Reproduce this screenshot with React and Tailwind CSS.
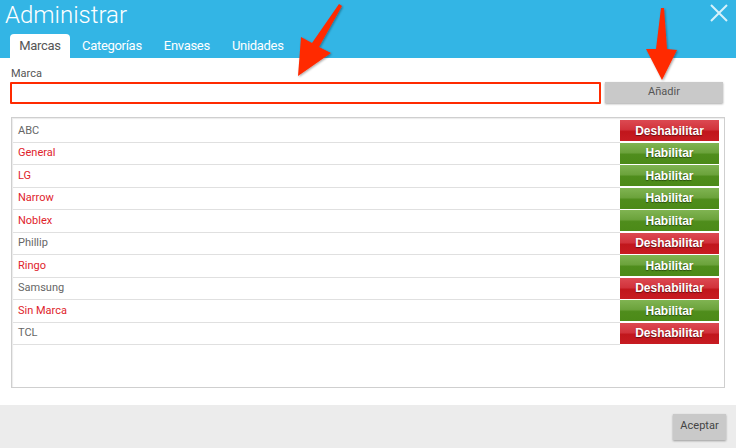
import React from 'react';

const marcas = [
  { name: 'ABC', enabled: true },
  { name: 'General', enabled: false },
  { name: 'LG', enabled: false },
  { name: 'Narrow', enabled: false },
  { name: 'Noblex', enabled: false },
  { name: 'Phillip', enabled: true },
  { name: 'Ringo', enabled: false },
  { name: 'Samsung', enabled: true },
  { name: 'Sin Marca', enabled: false },
  { name: 'TCL', enabled: true },
];

const tabs = ['Marcas', 'Categorías', 'Envases', 'Unidades'];

const Arrows = () => (
  <svg className="absolute left-0 top-0 pointer-events-none" width="736" height="100" viewBox="0 0 736 100">
    <defs>
      <filter id="sh" x="-20%" y="-20%" width="140%" height="140%">
        <feDropShadow dx="1" dy="1" stdDeviation="1" floodColor="#000" floodOpacity="0.35" />
      </filter>
    </defs>
    <path
      d="M339 4 L342 6 L319 47 L331 53 L298 76 L301 37 L312 43 Z"
      fill="#ff2a00"
      filter="url(#sh)"
    />
    <path
      d="M661 8 L664 8 L667 49 L677 50 L662 80 L646 49 L656 49 Z"
      fill="#ff2a00"
      filter="url(#sh)"
    />
  </svg>
);

const ToggleButton = ({ enabled }) =>
  enabled ? (
    <button className="w-[99px] h-[21px] bg-[linear-gradient(#dc4a52_0%,#d2333c_45%,#c1161c_55%,#c71c22_100%)] text-white text-[12px] font-bold [text-shadow:0_1px_1px_rgba(0,0,0,0.45)] font-['Liberation_Sans',Arial,sans-serif]">
      Deshabilitar
    </button>
  ) : (
    <button className="w-[99px] h-[21px] bg-[linear-gradient(#80b452_0%,#6ca33c_45%,#4f8d1c_55%,#4c8a18_100%)] text-white text-[12px] font-bold [text-shadow:0_1px_1px_rgba(0,0,0,0.45)] font-['Liberation_Sans',Arial,sans-serif]">
      Habilitar
    </button>
  );

export default function App() {
  return (
    <div className="relative w-[736px] h-[448px] overflow-hidden flex flex-col font-['Roboto','Liberation_Sans',sans-serif]">
      {/* header */}
      <div className="bg-[#33b5e5] h-[58px] flex flex-col shrink-0 relative">
        <div className="h-[34px] pl-[5px] flex items-start">
          <h1 className="text-white text-[24px] font-light leading-[30px]">Administrar</h1>
        </div>
        <div className="flex items-end h-[24px] pl-[10px]">
          {tabs.map((t, i) => (
            <div
              key={t}
              className={
                i === 0
                  ? 'h-[24px] w-[60px] bg-white rounded-t-[4px] text-[#555] text-[13px] tracking-[-0.3px] flex items-center justify-center mr-[1px]'
                  : 'h-[24px] px-[11px] text-white text-[13px] tracking-[-0.3px] flex items-center'
              }
            >
              {t}
            </div>
          ))}
        </div>
        <svg className="absolute right-[8px] top-[4px]" width="18" height="18" viewBox="0 0 18 18">
          <path d="M1 1 L17 17 M17 1 L1 17" stroke="#d6f1fb" strokeWidth="2" />
        </svg>
      </div>

      {/* body */}
      <div className="flex-1 bg-white px-[10px] pt-[10px]">
        <div className="text-[11px] text-[#555] leading-[12px] pl-[1px]">Marca</div>
        <div className="flex gap-[4px] mt-[2px]">
          <div className="w-[591px] h-[22px] border-2 border-[#ff2a00] rounded-[1px]" />
          <button className="w-[118px] h-[21px] bg-[#c9c9c9] text-[#555] text-[11px] shadow-[0_1px_2px_rgba(0,0,0,0.35)]">
            Añadir
          </button>
        </div>
        <div className="mt-[13px] ml-[1px] w-[714px] h-[271px] border border-[#cfcfcf] pl-[1px] pt-[2px] shadow-[inset_1px_1px_1px_rgba(0,0,0,0.08)]">
          {marcas.map((m) => (
            <div key={m.name} className="flex h-[22.5px] items-center">
              <div
                className={`flex-1 h-full flex items-center pl-[5px] text-[11px] border-b border-[#e0e0e0] ${
                  m.enabled ? 'text-[#666]' : 'text-[#e0232b]'
                }`}
              >
                {m.name}
              </div>
              <div className="w-[104px] h-full flex items-start">
                <ToggleButton enabled={m.enabled} />
              </div>
            </div>
          ))}
        </div>
      </div>

      {/* footer */}
      <div className="h-[43px] bg-[#ececec] shrink-0 flex items-center justify-end pr-[10px]">
        <button className="w-[53px] h-[26px] bg-[#c9c9c9] text-[#444] text-[11px] shadow-[0_1px_2px_rgba(0,0,0,0.35)]">
          Aceptar
        </button>
      </div>

      <Arrows />
    </div>
  );
}
